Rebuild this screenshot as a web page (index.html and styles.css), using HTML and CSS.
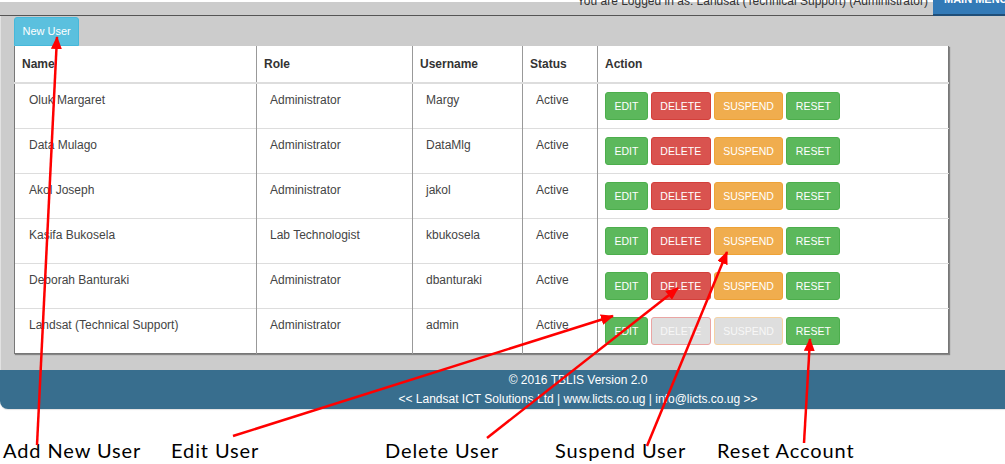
FILE: index.html
```html
<!DOCTYPE html>
<html lang="en">
<head>
<meta charset="utf-8">
<title>Users</title>
<link rel="stylesheet" href="styles.css">
</head>
<body>
<div class="page">
  <header class="topbar">
    <div class="login"><span class="login-text">You are Logged in as: Landsat (Technical Support) (Administrator)</span></div>
    <div class="mainmenu"><span class="mainmenu-text">MAIN MENU</span></div>
  </header>

  <main class="content">
    <button class="btn-new">New User</button>
    <table class="users">
      <colgroup>
        <col class="c-name"><col class="c-role"><col class="c-user"><col class="c-status"><col class="c-action">
      </colgroup>
      <thead>
        <tr><th>Name</th><th>Role</th><th>Username</th><th>Status</th><th>Action</th></tr>
      </thead>
      <tbody>
        <tr>
          <td class="txt name">Oluk Margaret</td><td class="txt">Administrator</td><td class="txt user">Margy</td><td class="txt">Active</td>
          <td class="act"><span class="btn edit">EDIT</span> <span class="btn delete">DELETE</span> <span class="btn suspend">SUSPEND</span> <span class="btn reset">RESET</span></td>
        </tr>
        <tr>
          <td class="txt name">Data Mulago</td><td class="txt">Administrator</td><td class="txt user">DataMlg</td><td class="txt">Active</td>
          <td class="act"><span class="btn edit">EDIT</span> <span class="btn delete">DELETE</span> <span class="btn suspend">SUSPEND</span> <span class="btn reset">RESET</span></td>
        </tr>
        <tr>
          <td class="txt name">Akol Joseph</td><td class="txt">Administrator</td><td class="txt user">jakol</td><td class="txt">Active</td>
          <td class="act"><span class="btn edit">EDIT</span> <span class="btn delete">DELETE</span> <span class="btn suspend">SUSPEND</span> <span class="btn reset">RESET</span></td>
        </tr>
        <tr>
          <td class="txt name">Kasifa Bukosela</td><td class="txt">Lab Technologist</td><td class="txt user">kbukosela</td><td class="txt">Active</td>
          <td class="act"><span class="btn edit">EDIT</span> <span class="btn delete">DELETE</span> <span class="btn suspend">SUSPEND</span> <span class="btn reset">RESET</span></td>
        </tr>
        <tr>
          <td class="txt name">Deborah Banturaki</td><td class="txt">Administrator</td><td class="txt user">dbanturaki</td><td class="txt">Active</td>
          <td class="act"><span class="btn edit">EDIT</span> <span class="btn delete">DELETE</span> <span class="btn suspend">SUSPEND</span> <span class="btn reset">RESET</span></td>
        </tr>
        <tr>
          <td class="txt name">Landsat (Technical Support)</td><td class="txt">Administrator</td><td class="txt user">admin</td><td class="txt">Active</td>
          <td class="act"><span class="btn edit">EDIT</span> <span class="btn delete disabled">DELETE</span> <span class="btn suspend disabled">SUSPEND</span> <span class="btn reset">RESET</span></td>
        </tr>
      </tbody>
    </table>
  </main>

  <footer class="footer">
    <div class="footer-line">© 2016 TBLIS Version 2.0</div>
    <div class="footer-line">&lt;&lt; Landsat ICT Solutions Ltd | www.licts.co.ug | info@licts.co.ug &gt;&gt;</div>
  </footer>

  <div class="labels">
    <span>Add New User</span>
    <span>Edit User</span>
    <span>Delete User</span>
    <span>Suspend User</span>
    <span>Reset Account</span>
  </div>

  <svg class="arrows" width="1005" height="464" viewBox="0 0 1005 464">
    <defs>
      <marker id="head" markerUnits="userSpaceOnUse" markerWidth="13" markerHeight="11" refX="12" refY="5.5" orient="auto">
        <path d="M0,0 L13,5.5 L0,11 Z" fill="#ff0000"/>
      </marker>
    </defs>
    <g stroke="#ff0000" stroke-width="2.5" fill="none">
      <line x1="37" y1="445" x2="57" y2="37" marker-end="url(#head)"/>
      <line x1="233" y1="436" x2="613" y2="316" marker-end="url(#head)"/>
      <line x1="487" y1="438" x2="678" y2="288" marker-end="url(#head)"/>
      <line x1="647" y1="446" x2="727" y2="252" marker-end="url(#head)"/>
      <line x1="804" y1="443" x2="810" y2="339" marker-end="url(#head)"/>
    </g>
  </svg>
</div>
</body>
</html>
```

FILE: styles.css
```css
* { box-sizing: border-box; }

html, body {
  margin: 0;
  padding: 0;
  background: #ffffff;
}

.page {
  position: relative;
  width: 1005px;
  height: 464px;
  overflow: hidden;
  font-family: "Liberation Sans", Arial, sans-serif;
  font-size: 12px;
  color: #333333;
}

/* ---------- top bar ---------- */
.topbar {
  display: flex;
  height: 16px;
}

.login {
  flex: 1;
  background: linear-gradient(#ffffff 0 2px, #cccccc 2px);
  border-bottom: 1px solid #555555;
  text-align: right;
  padding-right: 5px;
}

.login-text {
  display: block;
  margin-top: -6px;
  line-height: 14px;
  font-size: 12px;
  color: #333333;
  white-space: nowrap;
}

.mainmenu {
  width: 72px;
  background: #337ab7;
  border-bottom: 2px solid #1f4e78;
  overflow: hidden;
  padding-left: 11px;
}

.mainmenu-text {
  display: block;
  margin-top: -8px;
  line-height: 14px;
  font-size: 11px;
  font-weight: bold;
  color: #ffffff;
  white-space: nowrap;
}

/* ---------- content ---------- */
.content {
  background: #cccccc;
  border-left: 1px solid #e2e2e2;
  padding: 1px 0 16px 13px;
}

.btn-new {
  display: block;
  margin: 0;
  height: 29px;
  padding: 0 7.5px;
  font-family: "Liberation Sans", Arial, sans-serif;
  font-size: 11px;
  line-height: 27px;
  color: #ffffff;
  background: #5bc0de;
  border: 1px solid #46b8da;
  border-radius: 3px 3px 0 0;
}

.users {
  width: 934px;
  table-layout: fixed;
  border-collapse: collapse;
  background: #ffffff;
  border: 1px solid #777777;
  border-top: none;
  box-shadow: 1px 1px 1px rgba(0, 0, 0, 0.35);
}

.c-name { width: 242px; }
.c-role { width: 156px; }
.c-user { width: 110px; }
.c-status { width: 75px; }
.c-action { width: 351px; }

.users th {
  text-align: left;
  font-weight: bold;
  font-size: 12px;
  line-height: 17px;
  padding: 10px 7px 9px 7px;
  border-bottom: 2px solid #dddddd;
  border-left: 1px solid #999999;
  color: #333333;
}

.users td {
  vertical-align: top;
  line-height: 17px;
  padding: 8px 7px;
  border-top: 1px solid #dddddd;
  border-left: 1px solid #999999;
  white-space: nowrap;
}

.users th:first-child,
.users td:first-child {
  border-left: 1px solid #777777;
}

.users td.txt { padding-left: 13px; color: #444444; }
.users td.name { padding-left: 14px; }
.users td.user { padding-left: 13px; }
.users td.act { padding-left: 7px; font-size: 10.5px; }

/* ---------- action buttons ---------- */
.btn {
  display: inline-block;
  vertical-align: top;
  height: 28px;
  padding: 0 8.5px;
  border: 1px solid transparent;
  border-radius: 3px;
  font-size: 10.5px;
  line-height: 26px;
  color: #ffffff;
}

.btn.edit, .btn.reset {
  background: #5cb85c;
  border-color: #4cae4c;
}

.btn.delete {
  background: #d9534f;
  border-color: #d43f3a;
}

.btn.suspend {
  background: #f0ad4e;
  border-color: #eea236;
}

.btn.delete.disabled {
  background: #dedede;
  border-color: #eaa5a3;
  color: #f7f7f7;
}

.btn.suspend.disabled {
  background: #dedede;
  border-color: #f6d3a3;
  color: #f7f7f7;
}

/* ---------- footer ---------- */
.footer {
  height: 39px;
  padding: 1px 0 0 151px;
  background: #386e8e;
  border-radius: 0 0 0 8px;
  box-shadow: 0 1px 1px rgba(0, 0, 0, 0.12);
  color: #ffffff;
  text-align: center;
  font-size: 12px;
  line-height: 18.5px;
}

/* ---------- annotation labels ---------- */
.labels {
  display: grid;
  grid-template-columns: 168px 214px 170px 162px auto;
  margin-top: 29px;
  padding-left: 3px;
  font-family: Lato, "Open Sans", sans-serif;
  font-size: 20px;
  line-height: 24px;
  letter-spacing: 0.9px;
  color: #000000;
  white-space: nowrap;
}

.arrows {
  position: absolute;
  top: 0;
  left: 0;
  pointer-events: none;
}
```
